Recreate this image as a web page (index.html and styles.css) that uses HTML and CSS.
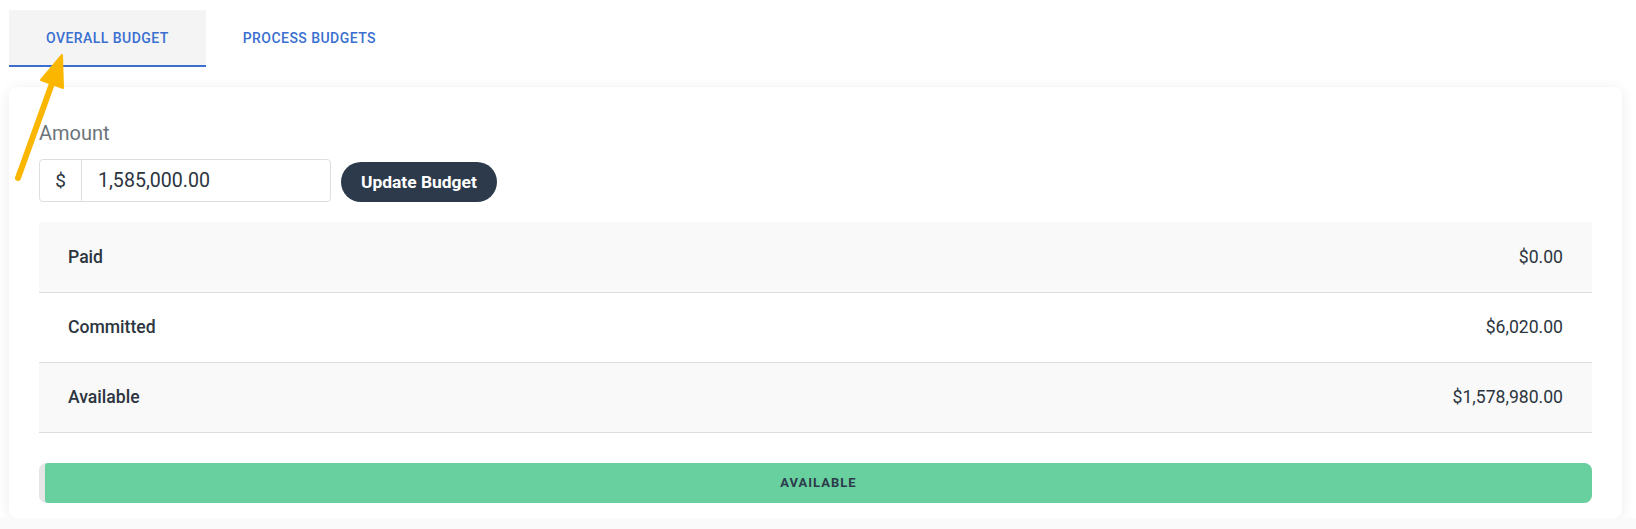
FILE: index.html
```html
<!DOCTYPE html>
<html lang="en">

<head>
    <meta charset="UTF-8">
    <title>Budget</title>
    <link rel="stylesheet" href="styles.css">
</head>

<body>

    <div class="topbar"></div>

    <main class="page">

        <nav class="tabs">
            <div class="tab valgt">Overall Budget</div>
            <div class="tab">Process Budgets</div>
        </nav>

        <section class="card">
            <label class="amount-label" for="amount">Amount</label>

            <div class="amount-row">
                <div class="input-group">
                    <span class="addon">$</span>
                    <input id="amount" type="text" value="1,585,000.00">
                </div>
                <button class="update">Update Budget</button>
            </div>

            <table class="summary">
                <tr>
                    <td class="navn">Paid</td>
                    <td class="belob">$0.00</td>
                </tr>
                <tr>
                    <td class="navn">Committed</td>
                    <td class="belob">$6,020.00</td>
                </tr>
                <tr>
                    <td class="navn">Available</td>
                    <td class="belob">$1,578,980.00</td>
                </tr>
            </table>

            <div class="progress">
                <div class="bar committed" style="width: 0.38%"></div>
                <div class="bar available" style="width: 99.62%">AVAILABLE</div>
            </div>
        </section>

    </main>

    <svg class="pil" width="80" height="190" viewBox="0 0 80 190">
        <line x1="18" y1="178" x2="54" y2="78" stroke="#fbb700" stroke-width="6" stroke-linecap="round" />
        <polygon points="62,55 41,80 63,88" fill="#fbb700" stroke="#fbb700" stroke-width="2" stroke-linejoin="round" />
    </svg>

</body>

</html>
```

FILE: styles.css
```css
body {
    margin: 0;
    background-color: #fafafa;
    font-family: Roboto, "Liberation Sans", sans-serif;
    color: #2c3540;
}

.topbar {
    height: 0;
    box-shadow: 0 0 16px 6px rgba(0, 0, 0, 0.05);
}

.page {
    padding: 10px 14px 0 9px;
    background-color: #fff;
}

.tabs {
    display: flex;
    height: 57px;
}

.tab {
    padding: 0 37px;
    height: 55px;
    line-height: 57px;
    font-size: 14px;
    font-weight: 500;
    letter-spacing: 0.45px;
    text-transform: uppercase;
    color: #3a6fd0;
    border-bottom: 2px solid transparent;
}

.tab.valgt {
    background-color: #f4f4f4;
    border-bottom-color: #3a6fd0;
}

.card {
    margin-top: 20px;
    padding: 34px 30px 15px;
    background-color: #fff;
    border-radius: 8px;
    box-shadow: 0 2px 14px rgba(0, 0, 0, 0.08);
}

.amount-label {
    display: block;
    font-size: 20px;
    line-height: 24px;
    color: #6c737a;
    margin-bottom: 14px;
}

.amount-row {
    display: flex;
    align-items: flex-end;
    gap: 10px;
}

.input-group {
    display: flex;
    width: 290px;
    height: 41px;
    border: 1px solid #dedede;
    border-radius: 4px;
}

.addon {
    width: 41px;
    border-right: 1px solid #dedede;
    font-size: 19px;
    line-height: 41px;
    text-align: center;
    color: #2c3540;
}

.input-group input {
    flex: 1;
    min-width: 0;
    border: none;
    outline: none;
    padding: 0 16px;
    font-family: Roboto, "Liberation Sans", sans-serif;
    font-size: 19.6px;
    color: #2c3540;
    background: transparent;
}

.update {
    height: 40px;
    padding: 0 20px;
    border: none;
    border-radius: 20px;
    background-color: #2c3a4b;
    color: #fff;
    font-family: Roboto, "Liberation Sans", sans-serif;
    font-size: 17.4px;
    font-weight: 700;
}

.summary {
    width: 100%;
    margin-top: 20px;
    border-collapse: collapse;
    font-size: 17.6px;
}

.summary tr {
    height: 70px;
    border-bottom: 1px solid #dedede;
}

.summary tr:nth-child(odd) {
    background-color: #f9f9f9;
}

.summary td {
    padding: 0 29px;
}

.navn {
    font-weight: 500;
}

.belob {
    text-align: right;
}

.progress {
    display: flex;
    margin-top: 30px;
    height: 40px;
    border-radius: 8px;
    overflow: hidden;
    background-color: #e6e6e6;
}

.bar {
    height: 100%;
}

.committed {
    background-color: #e6e6e6;
}

.available {
    background-color: #68cf9e;
    border-radius: 3px 0 0 3px;
    font-size: 13px;
    font-weight: 700;
    letter-spacing: 1px;
    line-height: 40px;
    text-align: center;
    color: #2c3a4b;
}

.pil {
    position: absolute;
    left: 0;
    top: 0;
}
```
